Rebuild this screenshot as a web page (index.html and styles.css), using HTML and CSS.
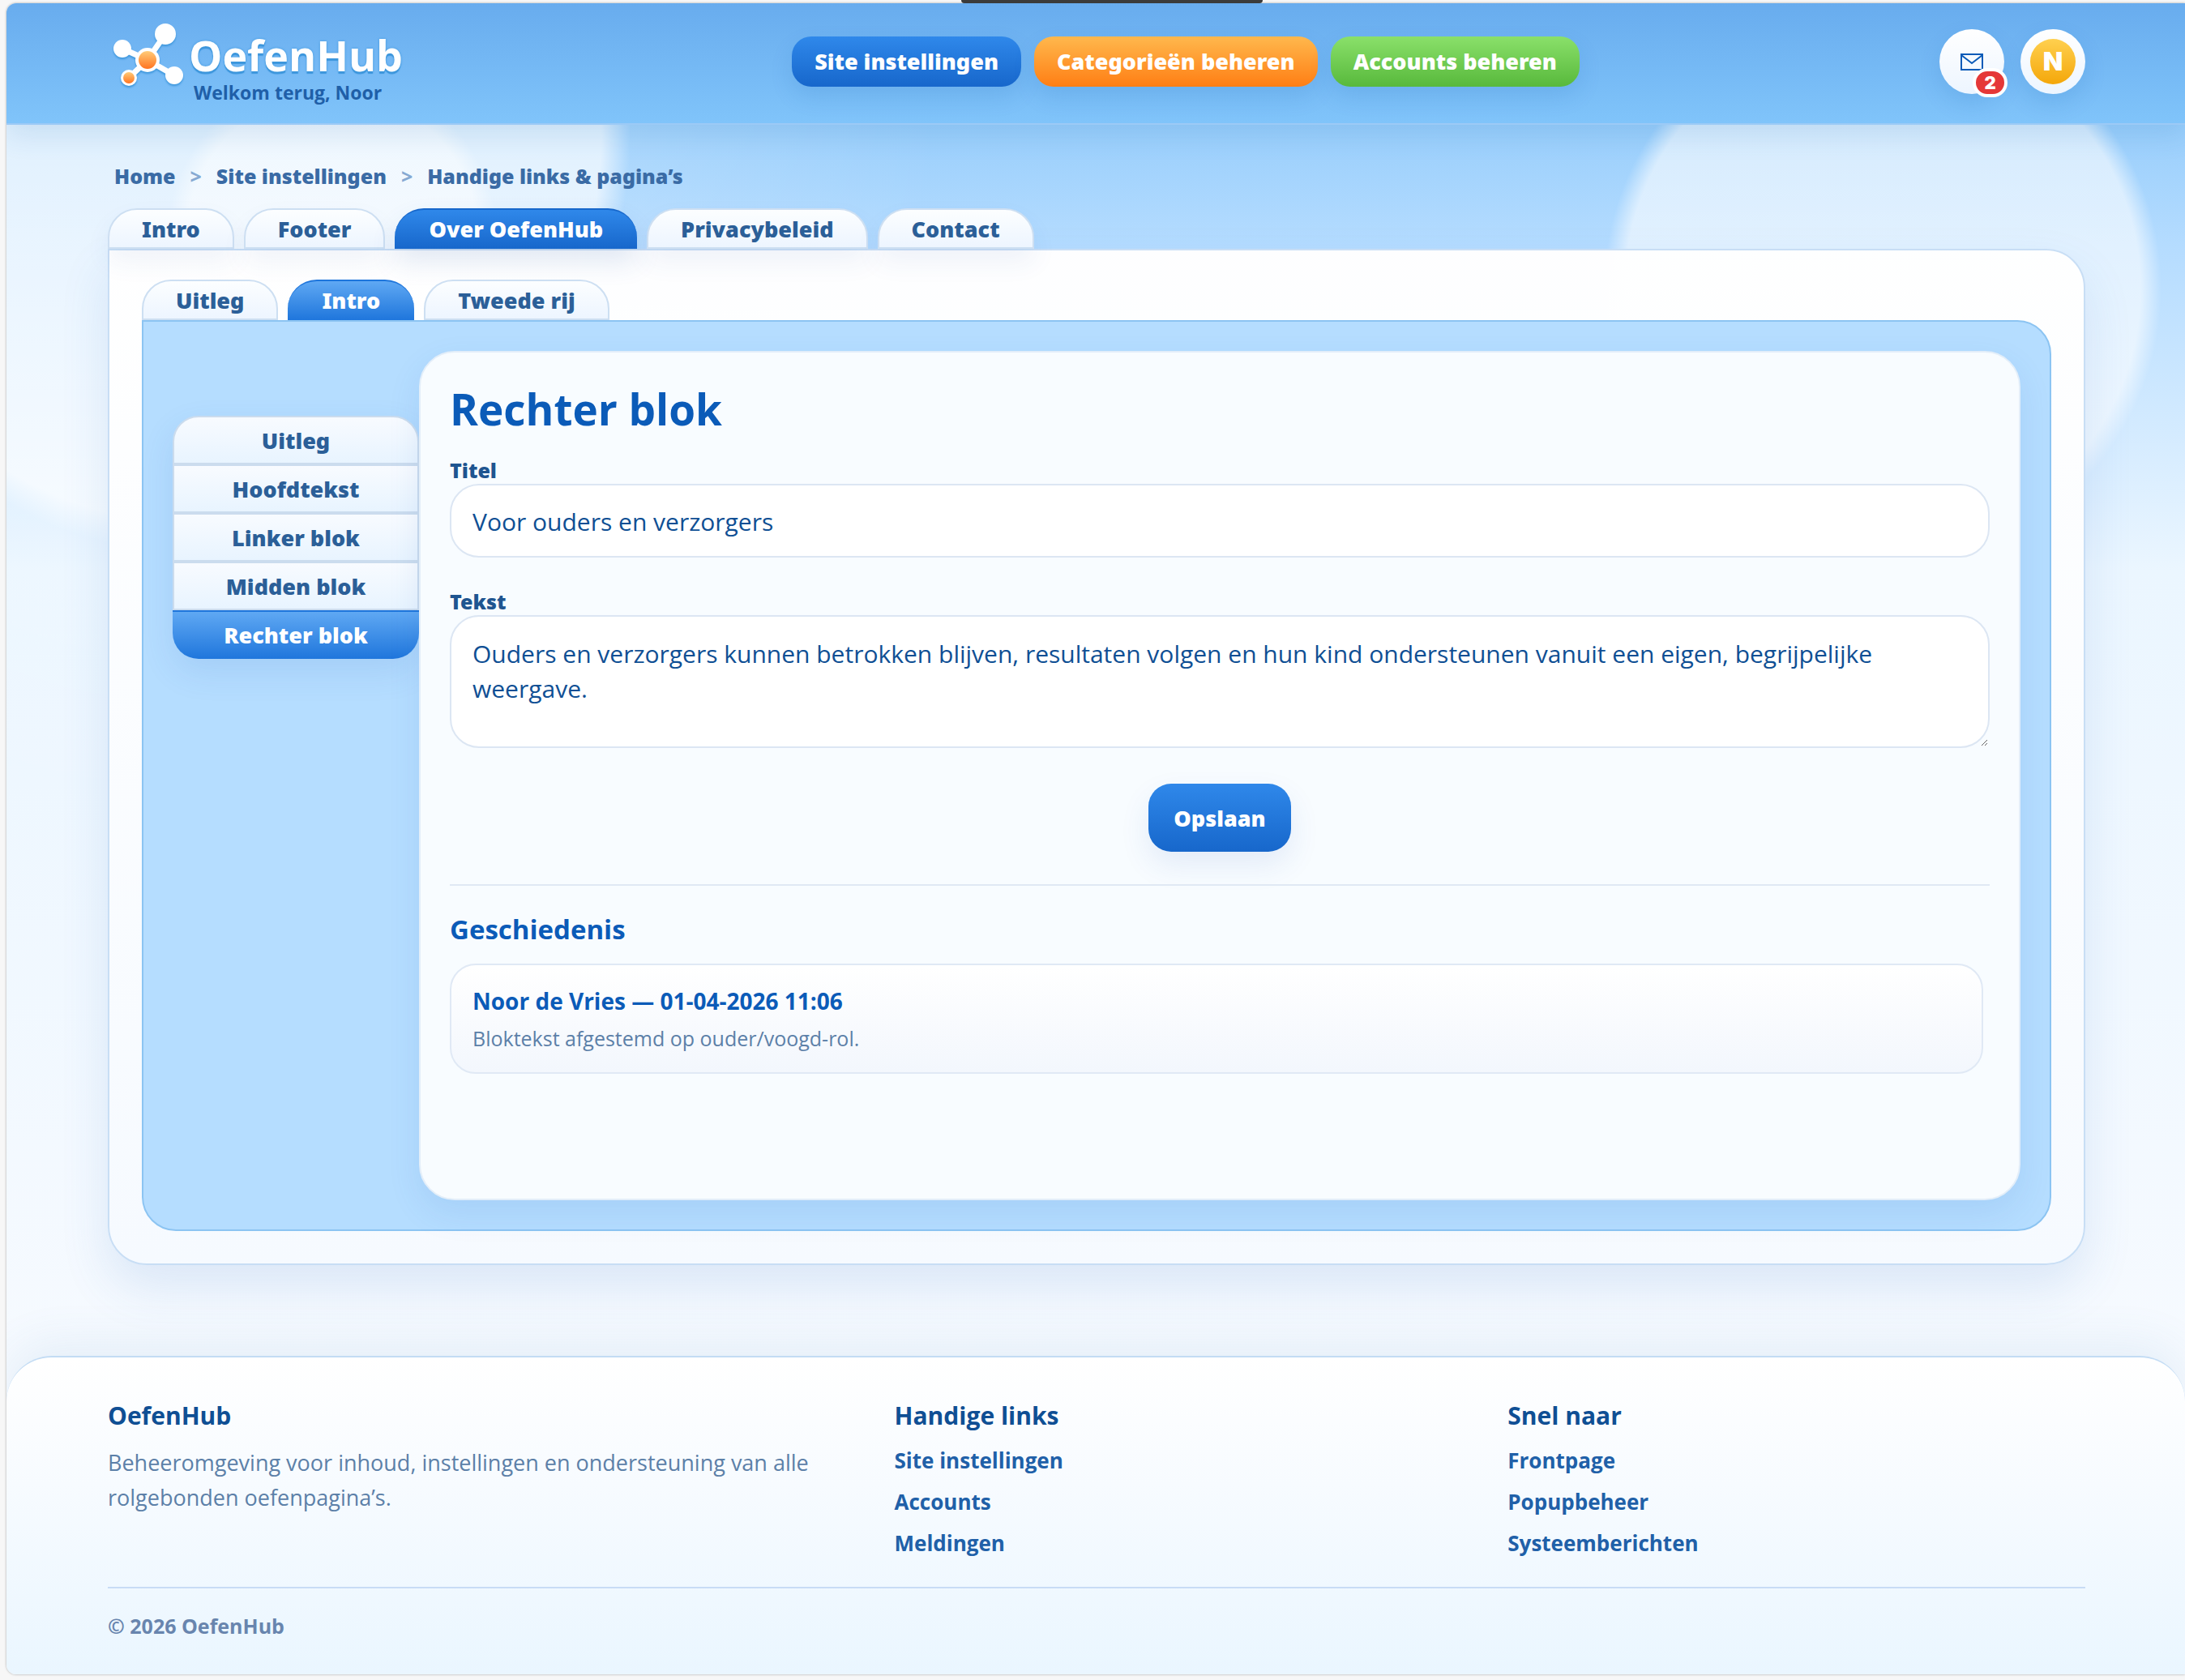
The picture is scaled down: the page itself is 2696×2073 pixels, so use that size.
FILE: index.html
```html
<!DOCTYPE html>
<html lang="nl">
<head>
    <meta charset="UTF-8">
    <meta name="viewport" content="width=device-width, initial-scale=1.0">
    <title>Handige links &amp; pagina’s - OefenHub</title>
    <link rel="stylesheet" href="styles.css">
</head>
<body>
    <div class="window-grip"></div>
    <div class="shell">
        <header class="site-header">
            <a class="brand" href="#">
                <svg class="brand-icon" viewBox="0 0 94 100" aria-hidden="true">
                    <defs>
                        <linearGradient id="orange" x1="0" y1="0" x2="0" y2="1">
                            <stop offset="0" stop-color="#ffcb78"/>
                            <stop offset="1" stop-color="#ff7420"/>
                        </linearGradient>
                    </defs>
                    <g stroke="#fff" stroke-width="7">
                        <path d="M45 46L67 14M45 46L14 32M45 46L78 65M45 46L22 68"/>
                    </g>
                    <g fill="#fff">
                        <circle cx="67" cy="14" r="13"/>
                        <circle cx="14" cy="32" r="11"/>
                        <circle cx="78" cy="65" r="11"/>
                        <circle cx="22" cy="68" r="10"/>
                        <circle cx="45" cy="46" r="15"/>
                    </g>
                    <circle cx="45" cy="46" r="11" fill="url(#orange)"/>
                    <circle cx="22" cy="68" r="7" fill="url(#orange)"/>
                </svg>
                <span class="brand-text">
                    <strong>OefenHub</strong>
                    <small>Welkom terug, Noor</small>
                </span>
            </a>
            <nav class="main-nav">
                <a class="blue" href="#">Site instellingen</a>
                <a class="orange" href="#">Categorieën beheren</a>
                <a class="green" href="#">Accounts beheren</a>
            </nav>
            <div class="header-actions">
                <button type="button" class="round-btn" aria-label="Meldingen">
                    <svg class="mail-icon" viewBox="0 0 28 22" aria-hidden="true">
                        <path d="M1 2H27V21H1ZM1 3L14 13L27 3" fill="none" stroke="#0b5bb8" stroke-width="2"/>
                    </svg>
                    <span class="badge">2</span>
                </button>
                <button type="button" class="round-btn" aria-label="Profiel"><span class="avatar">N</span></button>
            </div>
        </header>

        <main>
            <nav class="breadcrumb">
                <a href="#">Home</a><span>&gt;</span><a href="#">Site instellingen</a><span>&gt;</span><a href="#">Handige links &amp; pagina’s</a>
            </nav>
            <nav class="tabs">
                <a href="#">Intro</a>
                <a href="#">Footer</a>
                <a class="active" href="#">Over OefenHub</a>
                <a href="#">Privacybeleid</a>
                <a href="#">Contact</a>
            </nav>
            <section class="panel">
                <nav class="tabs subtabs">
                    <a href="#">Uitleg</a>
                    <a class="active" href="#">Intro</a>
                    <a href="#">Tweede rij</a>
                </nav>
                <div class="inner-panel">
                    <nav class="side-tabs">
                        <a href="#">Uitleg</a>
                        <a href="#">Hoofdtekst</a>
                        <a href="#">Linker blok</a>
                        <a href="#">Midden blok</a>
                        <a class="active" href="#">Rechter blok</a>
                    </nav>
                    <div class="card">
                        <h1>Rechter blok</h1>
                        <form>
                            <label for="titel">Titel</label>
                            <input type="text" id="titel" value="Voor ouders en verzorgers">
                            <label for="tekst">Tekst</label>
                            <textarea id="tekst">Ouders en verzorgers kunnen betrokken blijven, resultaten volgen en hun kind ondersteunen vanuit een eigen, begrijpelijke weergave.</textarea>
                            <button type="submit" class="save-btn">Opslaan</button>
                        </form>
                        <section class="history">
                            <h2>Geschiedenis</h2>
                            <article class="history-item">
                                <h3>Noor de Vries — 01-04-2026 11:06</h3>
                                <p>Bloktekst afgestemd op ouder/voogd-rol.</p>
                            </article>
                        </section>
                    </div>
                </div>
            </section>
        </main>

        <footer class="site-footer">
            <div class="footer-grid">
                <div>
                    <h4>OefenHub</h4>
                    <p>Beheeromgeving voor inhoud, instellingen en ondersteuning van alle rolgebonden oefenpagina’s.</p>
                </div>
                <div>
                    <h4>Handige links</h4>
                    <ul>
                        <li><a href="#">Site instellingen</a></li>
                        <li><a href="#">Accounts</a></li>
                        <li><a href="#">Meldingen</a></li>
                    </ul>
                </div>
                <div>
                    <h4>Snel naar</h4>
                    <ul>
                        <li><a href="#">Frontpage</a></li>
                        <li><a href="#">Popupbeheer</a></li>
                        <li><a href="#">Systeemberichten</a></li>
                    </ul>
                </div>
            </div>
            <div class="copyright">© 2026 OefenHub</div>
        </footer>
    </div>
</body>
</html>
```
FILE: styles.css
```css
* { margin: 0; padding: 0; box-sizing: border-box; }
body { background: #f7f7f7; padding: 4px 0 7px 8px; font-family: "Segoe UI", "Open Sans", "Noto Sans", sans-serif; color: #0f4f94; }
a { color: inherit; text-decoration: none; }
button, input, textarea { font-family: inherit; }
ul { list-style: none; }

.window-grip { position: absolute; top: 0; left: 44%; width: 372px; height: 4px; background: #3b3b3b; border-radius: 0 0 8px 8px; z-index: 2; }
.shell {
    border-radius: 12px 0 0 12px;
    overflow: hidden;
    box-shadow: 0 0 3px rgba(0, 0, 0, 0.35);
    background:
        radial-gradient(circle at 402px 290px, rgba(255, 255, 255, 0.5) 180px, transparent 204px),
        radial-gradient(circle at 250px 161px, rgba(255, 255, 255, 0.7) 484px, rgba(255, 255, 255, 0.12) 520px, transparent 900px),
        radial-gradient(circle at 2315px 352px, rgba(255, 255, 255, 0.6) 318px, transparent 344px),
        linear-gradient(180deg, #7cc0f8 0, #b5dcff 300px, #ebf6ff 700px, #f6faff 1670px);
}

/* header */
.site-header {
    display: grid; grid-template-columns: 400px 1fr auto; align-items: center;
    height: 150px; padding: 0 123px 4px 125px;
    background: linear-gradient(180deg, #68acee, #80c4fa);
    border-bottom: 2px solid #9ccaf6;
    box-shadow: 0 12px 32px rgba(40, 110, 180, 0.14);
}
.brand { display: flex; align-items: center; padding-left: 4px; }
.brand-icon { width: 94px; height: 100px; margin-top: 4px; filter: drop-shadow(0 2px 1px #3c96dc); }
.brand-text { display: flex; flex-direction: column; padding: 16px 0 0 2px; }
.brand-text strong { font-size: 52px; line-height: 60px; font-weight: 700; color: #fff; text-shadow: 0 3px 1px #3c96dc, 0 0 3px #3c96dc; }
.brand-text small { font-size: 23px; line-height: 32px; font-weight: 700; color: #1f5fa8; padding-left: 6px; }
.main-nav { display: flex; justify-content: center; gap: 16px; }
.main-nav a {
    height: 62px; line-height: 62px; padding: 0 28px; border-radius: 24px;
    font-family: "Noto Sans", sans-serif; font-size: 27px; font-weight: 900; color: #fff;
    box-shadow: 0 12px 28px rgba(30, 100, 180, 0.14);
}
.blue, .save-btn { background: linear-gradient(180deg, #2f88ea, #1767cb); }
.orange { background: linear-gradient(180deg, #ffb84d, #ff7e14); }
.green { background: linear-gradient(180deg, #8ae06a, #58b93c); }
.header-actions { display: flex; gap: 20px; }
.round-btn {
    position: relative; display: flex; align-items: center; justify-content: center;
    width: 80px; height: 80px; border: none; border-radius: 50%;
    background: linear-gradient(180deg, #fff, #edf5ff);
    box-shadow: 0 12px 28px rgba(30, 100, 180, 0.14);
}
.mail-icon { width: 28px; height: 22px; }
.badge {
    position: absolute; right: -4px; bottom: -4px; width: 43px; height: 36px;
    border: 4px solid #fff; border-radius: 18px; background: #e53838;
    color: #fff; font-family: Inter, sans-serif; font-size: 22px; line-height: 28px; font-weight: 900;
}
.avatar {
    width: 56px; height: 56px; border-radius: 50%;
    background: linear-gradient(180deg, #ffd04f, #f4a70a);
    color: #fff; font-family: Inter, sans-serif; font-size: 32px; line-height: 56px; font-weight: 900;
}

/* content */
main { padding: 45px 123px 112px 125px; }
.breadcrumb { display: flex; gap: 18px; padding-left: 8px; margin-bottom: 22px; font-family: "Noto Sans", sans-serif; font-size: 25px; line-height: 36px; font-weight: 900; color: #3a6ba5; }
.breadcrumb span { color: #86a9d2; font-weight: 700; }
.tabs { display: flex; gap: 12px; font-family: "Noto Sans", sans-serif; }
.tabs a {
    height: 50px; line-height: 48px; padding: 0 40px;
    border: 2px solid #cddff2; border-radius: 36px 36px 0 0;
    background: linear-gradient(180deg, #fcfeff, #edf5ff);
    font-size: 27px; font-weight: 900; color: #2b5f98;
    box-shadow: 0 16px 32px rgba(40, 90, 170, 0.07);
}
.tabs .active { background: linear-gradient(180deg, #2f88ea, #1767cb); border-color: #1767cb; border-width: 2px 0 0; padding: 0 42px; color: #fff; box-shadow: 0 16px 32px rgba(40, 90, 170, 0.14); }
.panel {
    border: 2px solid #c8def5; border-radius: 0 48px 48px 48px; padding: 36px 40px 40px;
    background: linear-gradient(180deg, rgba(255, 255, 255, 0.98), #f6faff);
    box-shadow: 0 28px 60px rgba(50, 110, 190, 0.13);
}
.subtabs a { box-shadow: none; }
.subtabs .active { background: linear-gradient(180deg, #5fa8f3, #1f76dc); border-color: #1f76dc; box-shadow: none; }
.inner-panel {
    display: flex; align-items: flex-start; padding: 36px;
    border: 2px solid #8cc4f2; border-radius: 0 42px 42px 42px; background: #b5ddff;
}
.side-tabs { flex: 0 0 304px; margin-top: 80px; border-radius: 32px; box-shadow: 0 16px 40px rgba(40, 100, 190, 0.12); }
.side-tabs a {
    display: block; height: 60px; line-height: 58px; text-align: center;
    border: 2px solid #cbdcee;
    background: linear-gradient(180deg, #f8fbff, #e8f4ff);
    font-family: "Noto Sans", sans-serif; font-size: 27px; font-weight: 900; color: #2b5f98;
}
.side-tabs a:first-child { border-radius: 32px 32px 0 0; }
.side-tabs a:last-child { border-radius: 0 0 32px 32px; }
.side-tabs .active { background: linear-gradient(180deg, #5fa8f3, #1f76dc); border-color: #1f76dc transparent transparent; border-width: 2px 0 0; color: #fff; }
.card {
    flex: 1; min-height: 1048px; padding: 36px;
    border: 2px solid #e3eef9; border-radius: 44px; background: #f8fcff;
    box-shadow: 0 16px 40px rgba(40, 100, 190, 0.1);
}
.card h1 { font-size: 53px; line-height: 68px; font-weight: 700; color: #0b5bb8; margin-bottom: 24px; }
label { display: block; font-family: "Noto Sans", sans-serif; font-size: 25px; line-height: 34px; font-weight: 900; color: #1f5590; }
input, textarea {
    display: block; width: 100%; border: 2px solid #dce6f3; border-radius: 36px; background: #fff;
    padding: 0 26px; font-size: 30px; color: #0f4f94;
}
input { height: 91px; margin-bottom: 37px; padding-top: 2px; }
textarea { height: 164px; padding-top: 24px; line-height: 43px; resize: vertical; }
.save-btn {
    display: block; margin: 44px auto 40px; height: 84px; padding: 0 31px; border: none; border-radius: 28px;
    font-family: "Noto Sans", sans-serif; font-size: 27px; font-weight: 900; color: #fff;
    box-shadow: 0 16px 36px rgba(40, 90, 190, 0.1);
}
.history { border-top: 2px solid #e0e9f4; padding-top: 30px; }
.history h2 { font-size: 33px; line-height: 48px; font-weight: 700; color: #0b5bb8; margin-bottom: 18px; }
.history-item { margin-right: 8px; padding: 24px 26px 22px; border: 2px solid #e0e9f5; border-radius: 32px; background: linear-gradient(180deg, #fff, #f3f7fd); }
.history-item h3 { font-size: 28px; line-height: 40px; font-weight: 700; color: #0b5bb8; margin-bottom: 6px; }
.history-item p { font-size: 25px; line-height: 40px; color: #5c80a8; }

/* footer */
.site-footer {
    padding: 50px 123px 42px 125px; border-top: 2px solid #c3dcf4; border-radius: 56px 56px 0 0;
    background: linear-gradient(180deg, #fff, #f7fbff 40%, #eaf6ff);
    box-shadow: 0 -16px 56px rgba(50, 120, 180, 0.09);
}
.footer-grid { display: grid; grid-template-columns: 13fr 10fr 10fr; gap: 44px; padding-bottom: 35px; border-bottom: 2px solid #c8dcf5; }
.footer-grid h4 { font-size: 30px; line-height: 44px; font-weight: 700; color: #0f4f94; margin-bottom: 14px; }
.footer-grid p { font-size: 27px; line-height: 43px; color: #5c80a8; }
.footer-grid ul { display: flex; flex-direction: column; gap: 13px; }
.footer-grid li { font-size: 26px; line-height: 38px; font-weight: 700; color: #2060a8; }
.copyright { padding-top: 28px; font-size: 25px; line-height: 36px; font-weight: 700; color: #6885ae; }
```
